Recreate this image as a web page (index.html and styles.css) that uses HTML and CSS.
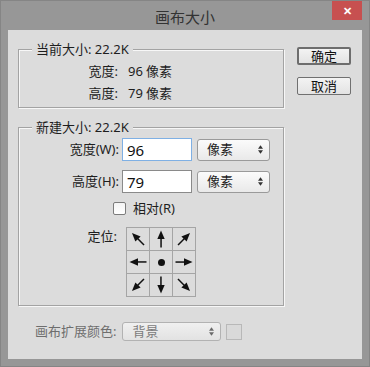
FILE: index.html
```html
<!DOCTYPE html>
<html lang="zh-CN">
  <head>
    <meta charset="UTF-8" />
    <title>画布大小</title>
    <link rel="stylesheet" href="styles.css">
  </head>
  <body>
    <svg class="defs" width="0" height="0">
      <symbol id="arrow" viewBox="0 0 22 22">
        <polygon points="11,2.5 7.3,11 14.7,11" />
        <rect x="10.3" y="10" width="1.5" height="9.5" />
      </symbol>
      <symbol id="updown" viewBox="0 0 6 10">
        <polygon points="3,0 6,4 0,4" />
        <polygon points="0,6 6,6 3,10" />
      </symbol>
    </svg>

    <div class="window">
      <div class="titlebar">
        <span></span>
        <span class="title">画布大小</span>
        <span class="close">&#x2715;</span>
      </div>

      <div class="panel">
        <div class="main">
          <fieldset class="group group-current">
            <legend>当前大小: 22.2K</legend>
            <div class="info-row">
              <span class="info-label">宽度:</span>
              <span class="info-value">96</span>
              <span class="info-unit">像素</span>
            </div>
            <div class="info-row">
              <span class="info-label">高度:</span>
              <span class="info-value">79</span>
              <span class="info-unit">像素</span>
            </div>
          </fieldset>

          <fieldset class="group group-new">
            <legend>新建大小: 22.2K</legend>
            <div class="field-row first">
              <label class="field-label" for="w">宽度(W):</label>
              <input class="num focused" id="w" type="text" value="96" />
              <div class="select">
                <span>像素</span>
                <svg class="updown"><use href="#updown" /></svg>
              </div>
            </div>
            <div class="field-row">
              <label class="field-label" for="h">高度(H):</label>
              <input class="num" id="h" type="text" value="79" />
              <div class="select">
                <span>像素</span>
                <svg class="updown"><use href="#updown" /></svg>
              </div>
            </div>
            <div class="check-row">
              <span class="checkbox"></span>
              <span>相对(R)</span>
            </div>
            <div class="anchor-row">
              <span class="anchor-label">定位:</span>
              <div class="anchor">
                <div class="cell"><svg class="a nw"><use href="#arrow" /></svg></div>
                <div class="cell"><svg class="a n"><use href="#arrow" /></svg></div>
                <div class="cell"><svg class="a ne"><use href="#arrow" /></svg></div>
                <div class="cell"><svg class="a w"><use href="#arrow" /></svg></div>
                <div class="cell"><span class="dot"></span></div>
                <div class="cell"><svg class="a e"><use href="#arrow" /></svg></div>
                <div class="cell"><svg class="a sw"><use href="#arrow" /></svg></div>
                <div class="cell"><svg class="a s"><use href="#arrow" /></svg></div>
                <div class="cell"><svg class="a se"><use href="#arrow" /></svg></div>
              </div>
            </div>
          </fieldset>

          <div class="ext-row">
            <span class="ext-label">画布扩展颜色:</span>
            <div class="select disabled">
              <span>背景</span>
              <svg class="updown"><use href="#updown" /></svg>
            </div>
            <span class="swatch"></span>
          </div>
        </div>

        <div class="actions">
          <button class="btn default">确定</button>
          <button class="btn">取消</button>
        </div>
      </div>
    </div>
  </body>
</html>
```

FILE: styles.css
```css
* {
  margin: 0;
  padding: 0;
  box-sizing: border-box;
}

body {
  font-family: "Noto Sans", "Noto Sans CJK SC", sans-serif;
  font-size: 13px;
  line-height: 17px;
  color: #1e1e1e;
  background: #979797;
}

.defs {
  position: absolute;
}

.window {
  width: 370px;
  height: 367px;
  background: #979797;
  border: 1px solid #858585;
  padding: 0 7px;
}

/* title bar */
.titlebar {
  height: 29px;
  display: grid;
  grid-template-columns: 1fr auto 1fr;
}

.title {
  font-family: "Noto Sans CJK SC", sans-serif;
  font-size: 15px;
  line-height: 29px;
  color: #333;
  padding-top: 1px;
}

.close {
  justify-self: end;
  width: 30px;
  height: 19px;
  background: #c75050;
  color: #fff;
  font-size: 11px;
  font-weight: bold;
  line-height: 19px;
  text-align: center;
}

/* main panel */
.panel {
  height: 329px;
  background: #dcdcdc;
  display: flex;
  padding-left: 10px;
}

.main {
  width: 266px;
  padding-top: 11px;
}

.group {
  border: 1px solid #a3a3a3;
  box-shadow: inset 1px 1px 0 #f7f7f7, 1px 1px 0 #f7f7f7;
  min-inline-size: 0;
}

.group legend {
  margin-left: 13px;
  padding: 0 4px;
  line-height: 17px;
  background: #dcdcdc;
}

.group-current {
  padding: 2px 0 3px;
}

.info-row {
  display: flex;
  line-height: 22px;
}

.info-label {
  width: 99px;
  text-align: right;
}

.info-value {
  margin-left: 10px;
}

.info-unit {
  margin-left: 3px;
}

.group-new {
  margin-top: 11px;
  padding: 1px 0 8px;
}

.field-row {
  display: flex;
  align-items: center;
  margin-top: 9px;
}

.field-row.first {
  margin-top: 1px;
}

.field-label {
  width: 100px;
  text-align: right;
  margin-right: 3px;
}

.num {
  width: 70px;
  height: 23px;
  border: 1px solid #8a8a8a;
  background: #fff;
  font-family: "Noto Sans", sans-serif;
  font-size: 15px;
  padding-left: 4px;
  color: #111;
  outline: none;
}

.num.focused {
  border-color: #7fb0e4;
}

.select {
  display: flex;
  align-items: center;
  justify-content: space-between;
  width: 73px;
  height: 22px;
  margin-left: 5px;
  padding: 0 6px 0 9px;
  border: 1px solid #9a9a9a;
  border-radius: 3px;
  background: linear-gradient(#fbfbfb, #e9e9e9);
}

.updown {
  width: 5px;
  height: 9px;
  fill: #333;
}

.check-row {
  display: flex;
  align-items: center;
  margin-top: 7px;
  padding-left: 94px;
  gap: 7px;
}

.checkbox {
  width: 13px;
  height: 13px;
  border: 1px solid #7c7c7c;
  border-radius: 2px;
  background: linear-gradient(#f4f4f4, #fff);
}

.anchor-row {
  display: flex;
  align-items: flex-start;
  margin-top: 10px;
}

.anchor-label {
  width: 98px;
  text-align: right;
  margin-right: 9px;
  padding-top: 1px;
}

.anchor {
  display: grid;
  grid-template-columns: repeat(3, 22px);
  grid-auto-rows: 22px;
  gap: 1px;
  padding: 1px;
  background: #a5a5a5;
}

.cell {
  background: #dcdcdc;
  display: flex;
  align-items: center;
  justify-content: center;
}

.a {
  width: 22px;
  height: 22px;
  fill: #111;
}

.n { transform: rotate(0deg); }
.ne { transform: rotate(45deg); }
.e { transform: rotate(90deg); }
.se { transform: rotate(135deg); }
.s { transform: rotate(180deg); }
.sw { transform: rotate(225deg); }
.w { transform: rotate(270deg); }
.nw { transform: rotate(315deg); }

.dot {
  width: 7px;
  height: 7px;
  border-radius: 50%;
  background: #111;
}

/* bottom row */
.ext-row {
  display: flex;
  align-items: center;
  margin-top: 16px;
  padding-left: 17px;
}

.ext-label {
  color: #6e6e6e;
}

.select.disabled {
  width: 99px;
  height: 19px;
  margin-left: 6px;
  color: #7c7c7c;
  border-color: #b2b2b2;
  background: linear-gradient(#f0f0f0, #e2e2e2);
}

.select.disabled .updown {
  fill: #6a6a6a;
}

.swatch {
  width: 16px;
  height: 16px;
  margin-left: 5px;
  border: 1px solid #b8b8b8;
  background: #d9d9d9;
}

/* buttons */
.actions {
  display: flex;
  flex-direction: column;
  gap: 12px;
  margin-left: 13px;
  padding-top: 17px;
}

.btn {
  width: 54px;
  height: 18px;
  font-family: "Noto Sans CJK SC", sans-serif;
  font-size: 13px;
  line-height: 14px;
  color: #111;
  border: 1px solid #707070;
  border-radius: 2px;
  background: linear-gradient(#f3f3f3, #e3e3e3);
}

.btn.default {
  border: 2px solid #6d6d6d;
}
```
